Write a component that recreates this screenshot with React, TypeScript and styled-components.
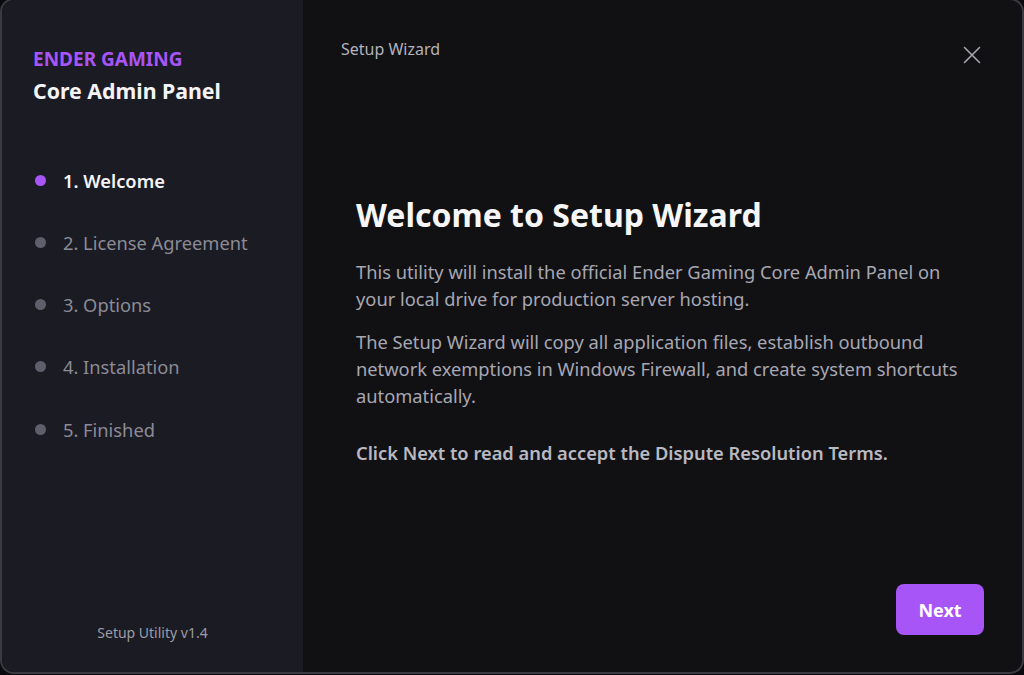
import styled, { createGlobalStyle } from "styled-components";

const GlobalStyle = createGlobalStyle`
  * { box-sizing: border-box; }
  html, body {
    margin: 0;
    padding: 0;
    background: #0a0a0c;
    overflow: hidden;
  }
  body {
    font-family: "Noto Sans", "Open Sans", sans-serif;
  }
`;

const Window = styled.div`
  width: 1024px;
  height: 676px;
  margin-top: -2px;
  display: flex;
  border: 2px solid #3a3a42;
  border-radius: 14px;
  overflow: hidden;
  background-color: #111114;
`;

const Sidebar = styled.aside`
  width: 301px;
  flex-shrink: 0;
  display: flex;
  flex-direction: column;
  padding: 47px 0 30px 31px;
  background-color: #1b1b24;
`;

const BrandTop = styled.div`
  font-size: 19px;
  font-weight: 700;
  color: #a855f7;
  line-height: 24px;
`;

const BrandName = styled.div`
  margin-top: 7px;
  font-size: 21.3px;
  font-weight: 700;
  color: #f4f4f6;
  line-height: 26px;
`;

const Steps = styled.ul`
  list-style: none;
  margin: 63px 0 0 0;
  padding: 0;
  display: flex;
  flex-direction: column;
  gap: 36.25px;
`;

const Step = styled.li<{ $active?: boolean }>`
  display: flex;
  align-items: center;
  gap: 17px;
  height: 26px;
  font-size: 18.3px;
  font-weight: ${({ $active }) => ($active ? 600 : 400)};
  color: ${({ $active }) => ($active ? "#f4f4f6" : "#8b8b96")};
`;

const Dot = styled.span<{ $active?: boolean }>`
  width: 11px;
  height: 11px;
  border-radius: 50%;
  margin-left: 2px;
  background-color: ${({ $active }) => ($active ? "#a855f7" : "#5f5f6b")};
`;

const Version = styled.div`
  margin-top: auto;
  margin-right: 31px;
  text-align: center;
  font-size: 14px;
  color: #9c9ca6;
`;

const Main = styled.main`
  flex: 1;
  display: flex;
  flex-direction: column;
  padding: 38px 40px 37px 38px;
`;

const Header = styled.div`
  display: flex;
  justify-content: space-between;
  align-items: flex-start;
`;

const Title = styled.div`
  font-size: 16px;
  color: #b3b3bc;
  line-height: 22px;
`;

const CloseButton = styled.button`
  margin-top: 7px;
  width: 20px;
  height: 20px;
  padding: 0;
  border: none;
  background: none;
  display: flex;
  align-items: center;
  justify-content: center;
  cursor: pointer;
`;

const Content = styled.section`
  margin-top: 130px;
  padding-left: 15px;
  max-width: 632px;
`;

const Heading = styled.h1`
  margin: 0 0 23px 0;
  font-size: 32px;
  font-weight: 700;
  color: #f6f6f8;
  line-height: 40px;
`;

const Paragraph = styled.p<{ $strong?: boolean }>`
  margin: 0 0 ${({ $strong }) => ($strong ? 0 : 16)}px 0;
  font-size: 18.3px;
  line-height: 27px;
  font-weight: ${({ $strong }) => ($strong ? 600 : 400)};
  color: ${({ $strong }) => ($strong ? "#b9b9c2" : "#a7a7b2")};
`;

const Spacer = styled.div`
  height: 14px;
`;

const Footer = styled.div`
  margin-top: auto;
  display: flex;
  justify-content: flex-end;
`;

const NextButton = styled.button`
  margin-right: -2px;
  width: 88px;
  height: 51px;
  border: none;
  border-radius: 8px;
  background-color: #a855f7;
  color: #ffffff;
  font-family: inherit;
  font-size: 18px;
  font-weight: 700;
  cursor: pointer;
`;

const steps = [
  "1. Welcome",
  "2. License Agreement",
  "3. Options",
  "4. Installation",
  "5. Finished",
];

export default function App() {
  return (
    <>
      <GlobalStyle />
      <Window>
        <Sidebar>
          <BrandTop>ENDER GAMING</BrandTop>
          <BrandName>Core Admin Panel</BrandName>
          <Steps>
            {steps.map((label, index) => (
              <Step key={label} $active={index === 0}>
                <Dot $active={index === 0} />
                {label}
              </Step>
            ))}
          </Steps>
          <Version>Setup Utility v1.4</Version>
        </Sidebar>
        <Main>
          <Header>
            <Title>Setup Wizard</Title>
            <CloseButton aria-label="Close">
              <svg width="18" height="18" viewBox="0 0 18 18">
                <path
                  d="M1.5 1.5 L16.5 16.5 M16.5 1.5 L1.5 16.5"
                  stroke="#a6a6b0"
                  strokeWidth="1.6"
                  strokeLinecap="round"
                />
              </svg>
            </CloseButton>
          </Header>
          <Content>
            <Heading>Welcome to Setup Wizard</Heading>
            <Paragraph>
              This utility will install the official Ender Gaming Core Admin
              Panel on your local drive for production server hosting.
            </Paragraph>
            <Paragraph>
              The Setup Wizard will copy all application files, establish
              outbound network exemptions in Windows Firewall, and create
              system shortcuts automatically.
            </Paragraph>
            <Spacer />
            <Paragraph $strong>
              Click Next to read and accept the Dispute Resolution Terms.
            </Paragraph>
          </Content>
          <Footer>
            <NextButton>Next</NextButton>
          </Footer>
        </Main>
      </Window>
    </>
  );
}
